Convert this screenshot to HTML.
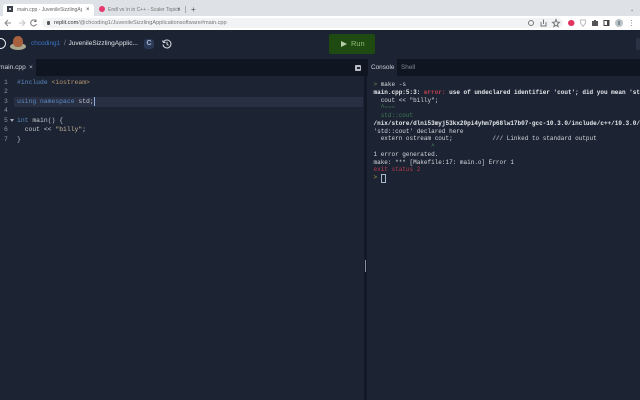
<!DOCTYPE html>
<html><head><meta charset="utf-8"><style>
html,body{margin:0;padding:0;background:#1c2333}
#r{position:relative;width:640px;height:400px;overflow:hidden;background:#1c2333;font-family:"Liberation Sans",sans-serif;filter:blur(0.35px)}
.a{position:absolute}
.t{position:absolute;white-space:pre;line-height:8px}
.m{font-family:"Liberation Mono",monospace}
.c{font-size:6.4px;color:#c2c8cc}
.o{font-size:6px;color:#d4d8dc}
</style></head><body><div id="r">
<!-- browser chrome -->
<div class="a" style="left:0;top:0;width:640px;height:16px;background:#dee1e6"></div>
<div class="a" style="left:3px;top:4px;width:91px;height:12px;background:#fff;border-radius:3px 3px 0 0"></div>
<div class="a" style="left:7px;top:6px;width:6px;height:6px;background:#3a3f48"></div>
<div class="a" style="left:9px;top:8px;width:2px;height:2px;background:#c8ccd0"></div>
<div class="t" style="left:17px;top:5.500px;font-size:5px;color:#666;width:65px;overflow:hidden">main.cpp - JuvenileSizzlingAp</div>
<div class="t" style="left:86px;top:5.500px;font-size:6px;color:#444">×</div>
<div class="a" style="left:99px;top:6px;width:6px;height:6px;background:#e8386e;border-radius:50%"></div>
<div class="t" style="left:108px;top:5.500px;font-size:5px;color:#777">Endl vs \n in C++ - Scaler Topics</div>
<div class="t" style="left:177px;top:5.500px;font-size:6px;color:#555">×</div>
<div class="a" style="left:185px;top:6px;width:1px;height:7px;background:#a9abaf"></div>
<div class="t" style="left:191px;top:5.500px;font-size:8px;color:#555">+</div>
<div class="t" style="left:630px;top:6px;font-size:5px;color:#666">⌄</div>
<div class="a" style="left:0;top:16px;width:640px;height:14px;background:#fff"></div>
<div class="a" style="left:42px;top:18px;width:521px;height:10px;background:#f1f3f4;border-radius:5px"></div>
<svg class="a" style="left:0;top:16px" width="42" height="14" fill="none" stroke-width="1"><path d="M11 7H5M8 4 5 7l3 3" stroke="#888"/><path d="M19 7h6M22 4l3 3-3 3" stroke="#c5c5c5"/><path d="M36 5a3 3 0 1 0 .5 3M36 3.500V5.500H34" stroke="#777"/></svg>
<div class="a" style="left:47px;top:21px;width:3px;height:4px;background:#555;border-radius:1px"></div>
<div class="t" style="left:54px;top:19px;font-size:5.600px;color:#777"><span style="color:#333">replit.com</span>/@chcoding1/JuvenileSizzlingApplicationsoftware#main.cpp</div>
<svg class="a" style="left:525px;top:16px" width="115" height="14" fill="none" stroke="#777" stroke-width="1"><circle cx="6" cy="7" r="2.500"/><path d="M16 6v4h5V6M18.500 8V3.500"/><path d="m31 3.500 1 2.500 2.500.3-2 1.700.6 2.500-2.100-1.300-2.100 1.300.6-2.500-2-1.700 2.500-.3z"/><rect x="43" y="4" width="6.500" height="6" rx="3" fill="#e0355f" stroke="none"/><path d="M55.500 4h5v3L58 10.500 55.500 7z" stroke="#bbb"/><path d="M67 5h2V4h2v1h2v5h-6z" fill="#555" stroke="none"/><rect x="79" y="4.500" width="5" height="5" stroke="#444"/><rect x="82" y="4.500" width="2" height="5" fill="#444" stroke="none"/><circle cx="94" cy="7" r="4" fill="#b8c2c4" stroke="none"/><path d="M94 5v4" stroke="#456"/><path d="M106.500 4v.800M106.500 6.600v.800M106.500 9.200v.800" stroke="#777"/></svg>
<!-- header -->
<div class="a" style="left:0;top:30px;width:640px;height:29px;background:#1c2333"></div>
<div class="a" style="left:-5px;top:38px;width:9px;height:9px;border:1.500px solid #e8eaee;border-radius:50%;background:#1c2333"></div>
<div class="a" style="left:10px;top:43px;width:16px;height:7px;background:#a8a890;border-radius:50%"></div>
<div class="a" style="left:13px;top:36px;width:10px;height:11px;background:#a8603f;border-radius:50% 50% 40% 40%"></div>
<div class="t" style="left:31px;top:40px;font-size:6.400px;color:#3c76c8">chcoding1</div>
<div class="t" style="left:64px;top:40px;font-size:7px;color:#7c8494">/</div>
<div class="t" style="left:68.500px;top:40px;font-size:6.500px;color:#e0e3e8">JuvenileSizzlingApplic...</div>
<div class="a" style="left:144px;top:39px;width:10px;height:10px;background:#2c3a55;border-radius:3px"></div>
<div class="t" style="left:146.500px;top:40px;font-size:7px;font-weight:bold;color:#a6bcd8">C</div>
<svg class="a" style="left:161px;top:38px" width="12" height="12" fill="none" stroke="#d4d8de" stroke-width="1"><path d="M2.500 4A4 4 0 1 1 2 6.500M1.500 2.500 2.500 4.500H4.500M6 3.800V6.200L7.500 7.300"/></svg>
<div class="a" style="left:329px;top:34px;width:46px;height:20px;background:#1f4b12;border-radius:2px"></div>
<svg class="a" style="left:340px;top:40px" width="8" height="8"><path d="M1 1 7 4 1 7z" fill="#b6cfa8"/></svg>
<div class="t" style="left:351px;top:40px;font-size:7.400px;color:#8cbc78">Run</div>
<div class="a" style="left:636px;top:38px;width:4px;height:12px;background:#2b3244;border-radius:2px 0 0 2px"></div>
<!-- tab bars -->
<div class="a" style="left:0;top:59px;width:640px;height:17px;background:#101522"></div>
<div class="a" style="left:0;top:59px;width:36px;height:17px;background:#1c2333"></div>
<div class="t" style="left:-1px;top:64px;font-size:6.600px;color:#d0d4da">main.cpp</div>
<div class="t" style="left:29px;top:64px;font-size:6.600px;color:#bbc0c8">×</div>
<div class="a" style="left:355px;top:65px;width:6px;height:6px;background:#b8bcc4;border-radius:1px"></div>
<div class="a" style="left:357px;top:67px;width:3px;height:2px;background:#222838"></div>
<div class="a" style="left:368px;top:59px;width:29px;height:17px;background:#1c2333"></div>
<div class="t" style="left:371px;top:64px;font-size:6.400px;color:#ccd0d6">Console</div>
<div class="t" style="left:401px;top:64px;font-size:6.400px;color:#808795">Shell</div>
<!-- editor -->
<div class="a" style="left:14px;top:97px;width:349px;height:10px;background:#282f42"></div>
<div class="a" style="left:93.500px;top:97px;width:1px;height:9px;background:#8fb0e0"></div>
<div class="t m c" style="left:4px;top:78.500px;color:#8c92a0">1</div>
<div class="t m c" style="left:4px;top:88px;color:#8c92a0">2</div>
<div class="t m c" style="left:4px;top:97.500px;color:#8c92a0">3</div>
<div class="t m c" style="left:4px;top:107px;color:#8c92a0">4</div>
<div class="t m c" style="left:4px;top:116.500px;color:#8c92a0">5</div>
<div class="t m c" style="left:4px;top:126px;color:#8c92a0">6</div>
<div class="t m c" style="left:4px;top:135.500px;color:#8c92a0">7</div>
<svg class="a" style="left:10px;top:118px" width="5" height="5"><path d="M0 1h4L2 4z" fill="#aab"/></svg>
<div class="t m c" style="left:17px;top:78.500px"><span style="color:#5a8ac0">#include</span> <span style="color:#b89a70">&lt;iostream&gt;</span></div>
<div class="t m c" style="left:17px;top:97.500px"><span style="color:#5a8ac0">using namespace</span> std;</div>
<div class="t m c" style="left:17px;top:116.500px"><span style="color:#5a8ac0">int</span> main() {</div>
<div class="t m c" style="left:17px;top:126px">  cout &lt;&lt; <span style="color:#c8b898">"billy"</span>;</div>
<div class="t m c" style="left:17px;top:135.500px">}</div>
<!-- divider -->
<div class="a" style="left:364px;top:76px;width:3px;height:324px;background:#131826"></div>
<div class="a" style="left:365px;top:260px;width:1px;height:12px;background:#8a90a0"></div>
<!-- console -->
<div class="t m o" style="left:373.500px;top:81px"><span style="color:#6b8a50">&gt;</span> make -s</div>
<div class="t m o" style="left:373.500px;top:88.500px;font-weight:bold;color:#e6e8ec">main.cpp:5:3: <span style="color:#c0424e">error:</span> use of undeclared identifier 'cout'; did you mean 'std::cout'?</div>
<div class="t m o" style="left:373.500px;top:96.500px">  cout &lt;&lt; "billy";</div>
<div class="t m o" style="left:373.500px;top:104px;color:#4f9060">  ^~~~</div>
<div class="t m o" style="left:373.500px;top:112px;color:#3f7a50">  std::cout</div>
<div class="t m o" style="left:373.500px;top:119.500px;font-weight:bold;color:#e6e8ec">/nix/store/dlni53myj53kx20pi4yhm7p68lw17b07-gcc-10.3.0/include/c++/10.3.0/iostream</div>
<div class="t m o" style="left:373.500px;top:127.500px">'std::cout' declared here</div>
<div class="t m o" style="left:373.500px;top:135px">  extern ostream cout;           /// Linked to standard output</div>
<div class="t m o" style="left:373.500px;top:143px;color:#4f9060">                ^</div>
<div class="t m o" style="left:373.500px;top:150.500px">1 error generated.</div>
<div class="t m o" style="left:373.500px;top:158.500px">make: *** [Makefile:17: main.o] Error 1</div>
<div class="t m o" style="left:373.500px;top:166px;color:#b83a48">exit status 2</div>
<div class="t m o" style="left:373.500px;top:174px;color:#a8a040">&gt;</div>
<div class="a" style="left:381px;top:174px;width:3px;height:7px;border:1px solid #a8b8c8"></div>
</div></body></html>
